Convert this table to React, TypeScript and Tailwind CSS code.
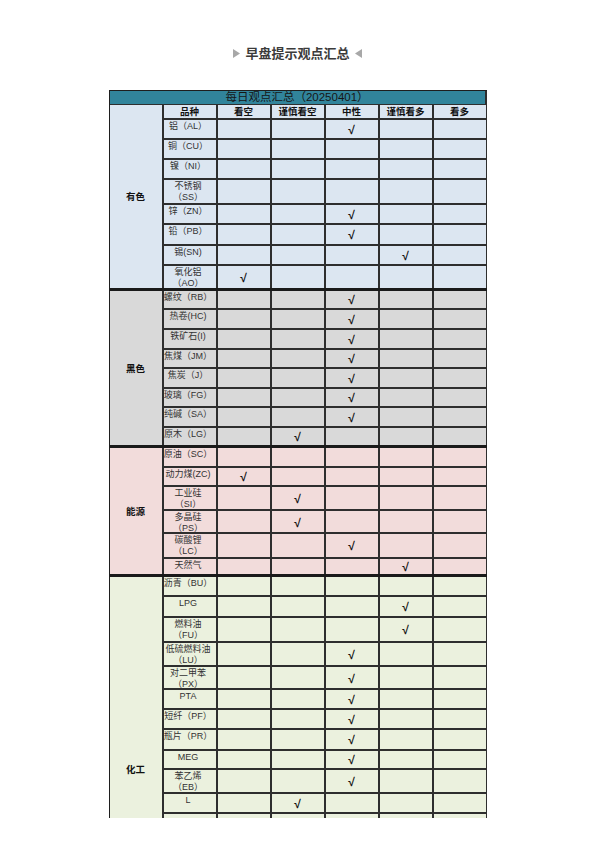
import React from "react";

type Row = { label: string[]; h: number; mark?: number };
type Section = { name: string; bg: string; rows: Row[] };

const COLS = ["看空", "谨慎看空", "中性", "谨慎看多", "看多"];

const sections: Section[] = [
  {
    name: "有色",
    bg: "bg-[#dce6f1]",
    rows: [
      { label: ["铝（AL）"], h: 20, mark: 2 },
      { label: ["铜（CU）"], h: 20 },
      { label: ["镍（NI）"], h: 20 },
      { label: ["不锈钢", "（SS）"], h: 25 },
      { label: ["锌（ZN）"], h: 20, mark: 2 },
      { label: ["铅（PB）"], h: 21, mark: 2 },
      { label: ["锡(SN)"], h: 20, mark: 3 },
      { label: ["氧化铝", "（AO）"], h: 25, mark: 0 },
    ],
  },
  {
    name: "黑色",
    bg: "bg-[#d9d9d9]",
    rows: [
      { label: ["螺纹（RB）"], h: 19, mark: 2 },
      { label: ["热卷(HC)"], h: 20, mark: 2 },
      { label: ["铁矿石(I)"], h: 20, mark: 2 },
      { label: ["焦煤（JM）"], h: 19, mark: 2 },
      { label: ["焦炭（J）"], h: 20, mark: 2 },
      { label: ["玻璃（FG）"], h: 19, mark: 2 },
      { label: ["纯碱（SA）"], h: 20, mark: 2 },
      { label: ["原木（LG）"], h: 20, mark: 1 },
    ],
  },
  {
    name: "能源",
    bg: "bg-[#f2dcdb]",
    rows: [
      { label: ["原油（SC）"], h: 20 },
      { label: ["动力煤(ZC)"], h: 19, mark: 0 },
      { label: ["工业硅", "（SI）"], h: 24, mark: 1 },
      { label: ["多晶硅", "（PS）"], h: 23, mark: 1 },
      { label: ["碳酸锂", "（LC）"], h: 25, mark: 2 },
      { label: ["天然气"], h: 18, mark: 3 },
    ],
  },
  {
    name: "化工",
    bg: "bg-[#ebf1de]",
    rows: [
      { label: ["沥青（BU）"], h: 20 },
      { label: ["LPG"], h: 21, mark: 3 },
      { label: ["燃料油", "（FU）"], h: 25, mark: 3 },
      { label: ["低硫燃料油", "（LU）"], h: 24, mark: 2 },
      { label: ["对二甲苯", "（PX）"], h: 23, mark: 2 },
      { label: ["PTA"], h: 20, mark: 2 },
      { label: ["短纤（PF）"], h: 20, mark: 2 },
      { label: ["瓶片（PR）"], h: 21, mark: 2 },
      { label: ["MEG"], h: 19, mark: 2 },
      { label: ["苯乙烯", "（EB）"], h: 24, mark: 2 },
      { label: ["L"], h: 20, mark: 1 },
      { label: [""], h: 151 },
    ],
  },
];

function Check() {
  return (
    <span className="font-['Liberation_Sans',sans-serif] text-[12px] font-bold leading-none text-[#111]">
      √
    </span>
  );
}

function ItemRow({ row, last }: { row: Row; last: boolean }) {
  return (
    <div
      className={`box-border grid grid-cols-[54px_54px_54px_54px_54px_54px] ${
        last ? "" : "border-b-2 border-[#2e2e2e]"
      }`}
      style={{ height: last ? row.h - 3 : row.h }}
    >
      <div className="border-r-2 border-[#2e2e2e] pt-[1px] pr-[3px] text-center font-['Liberation_Sans','Noto_Sans_CJK_SC',sans-serif] text-[9px] leading-[10.5px] text-[#333]">
        {row.label.map((l, i) => (
          <div key={i}>{l}</div>
        ))}
      </div>
      {COLS.map((c, i) => (
        <div
          key={c}
          className="flex items-center justify-center border-r-2 border-[#2e2e2e] pt-[1px]"
        >
          {row.mark === i ? <Check /> : null}
        </div>
      ))}
    </div>
  );
}

export default function App() {
  return (
    <div className="min-h-[842px] w-[595px] bg-white pt-[45px] font-['Noto_Sans_CJK_SC','Noto_Sans',sans-serif]">
      <div className="flex h-[16px] items-center justify-center gap-[5px]">
        <svg width="7" height="9" viewBox="0 0 7 9">
          <polygon points="0,0 7,4.5 0,9" fill="#a8a8a8" />
        </svg>
        <span className="text-[13px] font-bold leading-[16px] text-[#3b3b3b]">
          早盘提示观点汇总
        </span>
        <svg width="7" height="9" viewBox="0 0 7 9">
          <polygon points="7,0 0,4.5 7,9" fill="#a8a8a8" />
        </svg>
      </div>

      <div className="mx-auto mt-[29px] h-[728px] w-[378px] overflow-hidden">
        <div className="border-l border-t border-[#1e1e1e]">
          <div className="box-border flex h-[13px] items-center justify-center border-r-2 border-[#2e2e2e] bg-[#31849b] font-['Liberation_Sans','Noto_Sans_CJK_SC',sans-serif] text-[11.5px] leading-[13px] text-[#161616]">
            每日观点汇总（20250401）
          </div>

          <div className="border-t border-[#2e2e2e]">
            {sections.map((s, si) => (
              <div
                key={s.name}
                className={`flex border-b-[3px] border-[#1a1a1a] ${s.bg}`}
              >
                <div className="flex w-[54px] shrink-0 items-center justify-center border-r-2 border-[#2e2e2e] text-[9.5px] font-bold text-[#111]">
                  {s.name}
                </div>
                <div className="flex flex-col">
                  {si === 0 && (
                    <div className="box-border grid h-[15px] grid-cols-[54px_54px_54px_54px_54px_54px] border-b-2 border-[#2e2e2e]">
                      {["品种", ...COLS].map((c) => (
                        <div
                          key={c}
                          className="flex items-center justify-center border-r-2 border-[#2e2e2e] text-[9.5px] font-bold leading-none text-[#111]"
                        >
                          {c}
                        </div>
                      ))}
                    </div>
                  )}
                  {s.rows.map((r, ri) => (
                    <ItemRow key={ri} row={r} last={ri === s.rows.length - 1} />
                  ))}
                </div>
              </div>
            ))}
          </div>
        </div>
      </div>
    </div>
  );
}
